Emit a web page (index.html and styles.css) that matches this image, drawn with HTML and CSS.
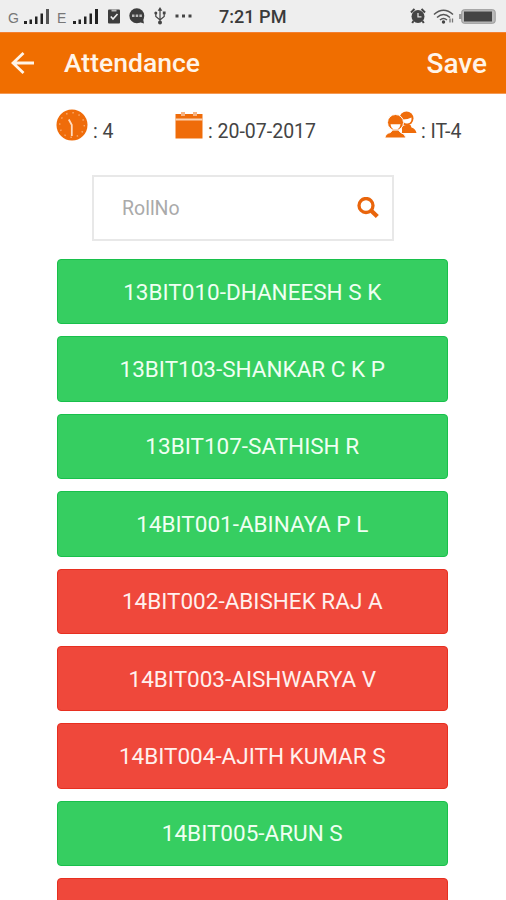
FILE: index.html
```html
<!DOCTYPE html>
<html lang="en">
<head>
<meta charset="utf-8">
<title>Attendance</title>
<link rel="stylesheet" href="styles.css">
</head>
<body>
<div class="status">
  <div class="status-left">
    <span class="net net-g">G</span>
    <svg class="signal" width="27" height="17" viewBox="0 0 27 17"><path fill="#222" d="M1 13h3v3H1zM6.5 11.500h2.500V16H6.500zM12 8.500h2.500V16H12zM17.500 5.500H20V16h-2.500z"/><path fill="#555" d="M23 1h3v15h-3z"/></svg>
    <span class="net net-e">E</span>
    <svg class="signal" width="27" height="17" viewBox="0 0 27 17"><path fill="#222" d="M1 13h3v3H1zM6.500 11.500h2.500V16H6.500zM12 8.500h2.500V16H12zM17.500 5.500H20V16h-2.500zM23 1h3v15h-3z"/></svg>
    <svg class="clip" width="12" height="16" viewBox="0 0 12 16"><rect y="1.500" width="12" height="14" rx="1" fill="#3d3d3d"/><path d="M3.500 1.500h5v2h-5z" fill="#bbb"/><path d="M2.800 8.500l2.200 2.500 4.500-5" fill="none" stroke="#eee" stroke-width="1.600"/></svg>
    <svg class="chat" width="16" height="16" viewBox="0 0 16 16"><circle cx="7.800" cy="7.800" r="7.500" fill="#3d3d3d"/><path d="M10 14l5 1.500-1-5z" fill="#3d3d3d"/><path d="M3 6.500h2.500v2.500H3zM6.700 6.500h2.500v2.500H6.700zM10.400 6.500h2.500v2.500h-2.500z" fill="#bbb"/></svg>
    <svg class="usb" width="12" height="18" viewBox="0 0 12 18"><path d="M6 2v14M1.800 6v3.500L6 13l4.200-3.500V6" fill="none" stroke="#444" stroke-width="1.200"/><path d="M6 0l2.300 3.800H3.700z" fill="#444"/><circle cx="6" cy="15.500" r="2" fill="#444"/><circle cx="1.800" cy="6" r="1.500" fill="#444"/><path d="M8.800 4.500h2.800v2.800H8.800z" fill="#444"/></svg>
    <svg class="dots" width="17" height="4" viewBox="0 0 17 4"><path fill="#444" d="M.5.5h3v3h-3zM7 .5h3v3H7zM13.500.5h3v3h-3z"/></svg>
  </div>
  <span class="time">7:21 PM</span>
  <div class="status-right">
    <svg class="alarm" width="16" height="16" viewBox="0 0 16 16"><circle cx="8" cy="8.500" r="6.500" fill="#444"/><path d="M1 4.500L4.500 1M15 4.500L11.500 1M3.500 13l-1.300 2M12.500 13l1.300 2" stroke="#444" stroke-width="2"/><path d="M8 5v3.800h3.500" fill="none" stroke="#ddd" stroke-width="1.300"/></svg>
    <svg class="wifi" width="22" height="15" viewBox="0 0 22 15"><g fill="none" stroke="#555" stroke-width="1.500"><path d="M1 5.500q9.500-8.500 19 0M4 8.500q6.500-6 13 0M7 11q3.500-3 7 0"/></g><circle cx="10.500" cy="13" r="1.700" fill="#444"/><path d="M17 9.500v4M19.500 9.500v4" stroke="#777" stroke-width="1.300"/></svg>
    <svg class="battery" width="37" height="15" viewBox="0 0 37 15"><path d="M0 5h3v5H0z" fill="#999"/><rect x="2.700" y=".7" width="33.500" height="13.600" rx="2.500" fill="#bbb" stroke="#999"/><path d="M5 2.500h28v10H5z" fill="#444"/></svg>
  </div>
</div>
<header class="bar">
  <svg class="back" width="24" height="24" viewBox="0 0 24 24"><path d="M12.500 2L2 12l10.500 10M2.500 12H23" fill="none" stroke="#fff4e8" stroke-width="2.800"/></svg>
  <h1 class="title">Attendance</h1>
  <span class="save">Save</span>
</header>
<section class="info">
  <div class="info-item hour">
    <svg width="32" height="32" viewBox="0 0 32 32"><circle cx="16" cy="16" r="15.500" fill="#ef6c0a"/><circle cx="16" cy="16" r="12.300" fill="none" stroke="#f9a768" stroke-width="1.500" stroke-dasharray="1.500 4.940"/><path d="M12.800 10.500L15.800 16v11" fill="none" stroke="#ffdcc0" stroke-width="1.800"/></svg>
    <span>: 4</span>
  </div>
  <div class="info-item date">
    <svg width="28" height="27" viewBox="0 0 28 27"><path fill="#ef6c0a" d="M.5 2H27.500V26.500H.5z"/><path fill="#fbd2b2" d="M.5 6.500h27v2H.5z"/><path fill="#f6b383" d="M6 0h4v4H6zM18 0h4v4h-4z"/></svg>
    <span>: 20-07-2017</span>
  </div>
  <div class="info-item group">
    <svg width="32" height="28" viewBox="0 0 32 28"><g fill="#ef6c0a"><circle cx="21.500" cy="7.500" r="7"/><path d="M17 22v-7l4-1h4.500l1 2.500q4 1 5 5.500z"/></g><path d="M18 8.500q5 0 8.500-2 .5 5.500-4 6T18 8.500z" fill="#fff"/><g fill="#ef6c0a"><circle cx="10.500" cy="11.500" r="8" stroke="#fff"/><path d="M-.2 27q.7-4.500 5.700-5.500l2-2.500h6l2 2.500q4.500 1 5.500 5.500z" stroke="#fff"/></g><path d="M5.500 13.200h10q-.8 5.300-5 5.300t-5-5.300z" fill="#fff"/></svg>
    <span>: IT-4</span>
  </div>
</section>
<div class="search">
  <span>RollNo</span>
  <svg width="22" height="22" viewBox="0 0 22 22"><g fill="none" stroke="#e9650c"><circle cx="9" cy="8.500" r="7" stroke-width="3.300"/><path d="M14 13.500l6.300 6" stroke-width="4.400"/></g></svg>
</div>
<main class="list">
  <div class="row present">13BIT010-DHANEESH S K</div>
  <div class="row present">13BIT103-SHANKAR C K P</div>
  <div class="row present">13BIT107-SATHISH R</div>
  <div class="row present">14BIT001-ABINAYA P L</div>
  <div class="row absent">14BIT002-ABISHEK RAJ A</div>
  <div class="row absent">14BIT003-AISHWARYA V</div>
  <div class="row absent">14BIT004-AJITH KUMAR S</div>
  <div class="row present">14BIT005-ARUN S</div>
  <div class="row absent"></div>
</main>
</body>
</html>
```
FILE: styles.css
```css
* { box-sizing: border-box; }
body {
  margin: 0;
  width: 506px;
  height: 900px;
  overflow: hidden;
  background: #fff;
  font-family: Roboto, "Liberation Sans", sans-serif;
}
svg { display: block; flex: none; }
.status {
  height: 32px;
  background: #eee;
  display: grid;
  grid-template-columns: 219px 1fr auto;
  align-items: center;
  padding-right: 10px;
}
.status-left, .status-right { display: flex; align-items: center; }
.status-left { padding-left: 8px; }
.net { font-family: "Liberation Sans", sans-serif; font-size: 14px; color: #777; line-height: 16px; padding-top: 4px; }
.net-g { width: 15px; }
.net-e { width: 15px; margin-left: 7px; }
.clip { margin-left: 9px; }
.chat { margin-left: 9px; }
.usb { margin-left: 9px; }
.dots { margin-left: 9px; }
.time { font-size: 18.1px; font-weight: 500; color: #3a3a3a; white-space: nowrap; padding-top: 1px; }
.wifi { margin-left: 7px; }
.battery { margin-left: 4px; }
.bar {
  height: 62px;
  background: #f06e00;
  border-top: 1px solid #f47f30;
  border-bottom: 1px solid #f49a55;
  display: flex;
  align-items: center;
  padding: 0 19px 0 11px;
  color: #fff4e8;
}
.title { margin: 0 0 0 29px; font-size: 26.5px; font-weight: 500; line-height: 32px; }
.save { margin: 2px 0 0 auto; font-size: 28px; line-height: 34px; font-weight: 500; }
.info {
  height: 81px;
  padding-left: 56px;
  display: grid;
  grid-template-columns: 119px 210px 1fr;
  align-items: start;
}
.info-item { display: flex; font-size: 19.5px; line-height: 24px; color: #444; white-space: nowrap; }
.info-item span { margin-top: 26px; margin-left: 5px; }
.group .info-item span { margin-left: 4px; }
.hour svg { margin-top: 15px; }
.date svg { margin-top: 18px; }
.group svg { margin-top: 17px; }
.group span { margin-left: 4px; }
.search {
  width: 302px;
  height: 66px;
  margin-left: 92px;
  border: 2px solid #e8e8e8;
  display: flex;
  align-items: center;
  justify-content: space-between;
  padding: 0 13px 0 28px;
  font-size: 19.5px;
  color: #aaa;
}
.list { margin: 18px 58px 0 56.500px; display: grid; row-gap: 12px; grid-auto-rows: 65.400px; }
.row {
  border: 1px solid;
  border-radius: 4px;
  display: flex;
  align-items: center;
  justify-content: center;
  color: #effff2;
  font-size: 22.500px;
  white-space: nowrap;
}
.present { background: #36ce61; border-color: #18c04b; }
.absent { background: #ef483b; border-color: #e72f20; color: #fff0ee; }
```
